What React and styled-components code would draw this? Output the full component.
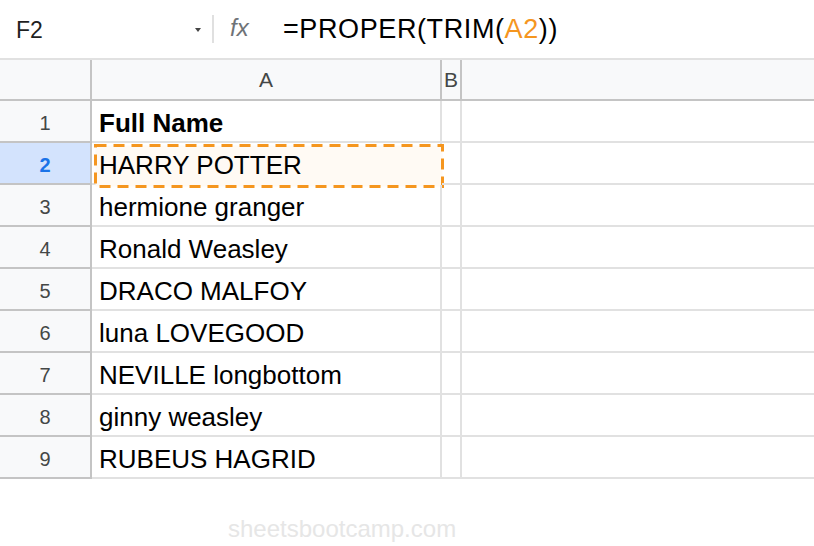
import React from 'react';
import styled, { createGlobalStyle } from 'styled-components';

const Global = createGlobalStyle`
  html, body { margin: 0; padding: 0; background: #fff; }
  body { font-family: "Liberation Sans", Arial, sans-serif; }
  * { box-sizing: border-box; }
`;

const Page = styled.div`
  width: 814px;
  height: 546px;
  display: flex;
  flex-direction: column;
  background: #fff;
  overflow: hidden;
`;

const FormulaBar = styled.div`
  height: 60px;
  display: flex;
  align-items: center;
  border-bottom: 2px solid #e1e1e1;
`;

const NameBox = styled.div`
  width: 212px;
  height: 100%;
  display: flex;
  align-items: center;
  justify-content: space-between;
  padding: 2px 11px 0 16px;
  font-size: 23px;
  color: #1f1f1f;
`;

const Caret = styled.span`
  width: 0;
  height: 0;
  border-left: 3px solid transparent;
  border-right: 3px solid transparent;
  border-top: 4px solid #444;
`;

const Divider = styled.div`
  width: 2px;
  height: 28px;
  background: #e0e0e0;
`;

const FxLabel = styled.div`
  width: 69px;
  padding: 0 0 2px 16px;
  font-style: italic;
  font-size: 24px;
  color: #6f7377;
`;

const FormulaText = styled.div`
  font-size: 27px;
  letter-spacing: 0.6px;
  color: #000;
`;

const Ref = styled.span`
  color: #f5961f;
`;

const Grid = styled.div`
  display: grid;
  grid-template-columns: 92px 350px 20px 1fr;
  grid-template-rows: 41px;
  grid-auto-rows: 42px;
`;

const HeadCell = styled.div`
  display: flex;
  align-items: center;
  justify-content: center;
  background: #f8f9fa;
  border-bottom: 2px solid #c4c4c4;
  border-right: ${p => (p.$last ? 'none' : '2px solid #c4c4c4')};
  font-size: 21px;
  color: #444746;
`;

const RowHead = styled.div`
  display: flex;
  align-items: center;
  justify-content: center;
  padding-top: 4px;
  background: ${p => (p.$active ? '#d3e3fd' : '#f8f9fa')};
  border-right: 2px solid #c4c4c4;
  border-bottom: 2px solid #c4c4c4;
  font-size: 20px;
  font-weight: ${p => (p.$active ? 700 : 400)};
  color: ${p => (p.$active ? '#1a73e8' : '#444746')};
`;

const Cell = styled.div`
  position: relative;
  display: flex;
  align-items: center;
  padding: 4px 0 0 7px;
  border-right: ${p => (p.$last ? 'none' : '2px solid #e1e1e1')};
  border-bottom: 2px solid #e1e1e1;
  font-size: 26px;
  line-height: 26px;
  font-weight: ${p => (p.$bold ? 700 : 400)};
  color: #000;
  white-space: nowrap;
`;

const CellText = styled.span`
  position: relative;
  z-index: 1;
`;

const CopyMarquee = styled.svg`
  position: absolute;
  left: 2px;
  top: 1px;
  width: 350px;
  height: 44px;
  overflow: visible;
`;

const Watermark = styled.div`
  margin-top: 38px;
  padding-left: 228px;
  font-size: 24px;
  line-height: 24px;
  color: #e6e6e6;
`;

const names = [
  'Full Name',
  'HARRY POTTER',
  'hermione granger',
  'Ronald Weasley',
  'DRACO MALFOY',
  'luna LOVEGOOD',
  'NEVILLE longbottom',
  'ginny weasley',
  'RUBEUS HAGRID',
];

function Marquee() {
  return (
    <CopyMarquee viewBox="0 0 350 44">
      <rect x="1.5" y="1.5" width="347" height="41" fill="#fffaf4" stroke="#f5961f" strokeWidth="3" strokeDasharray="11 7" />
    </CopyMarquee>
  );
}

export default function App() {
  return (
    <Page>
      <Global />
      <FormulaBar>
        <NameBox>
          <span>F2</span>
          <Caret />
        </NameBox>
        <Divider />
        <FxLabel>fx</FxLabel>
        <FormulaText>
          =PROPER(TRIM(<Ref>A2</Ref>))
        </FormulaText>
      </FormulaBar>
      <Grid>
        <HeadCell />
        <HeadCell>A</HeadCell>
        <HeadCell>B</HeadCell>
        <HeadCell $last />
        {names.map((n, i) => (
          <React.Fragment key={i}>
            <RowHead $active={i === 1}>{i + 1}</RowHead>
            <Cell $bold={i === 0}>
              {i === 1 && <Marquee />}
              <CellText>{n}</CellText>
            </Cell>
            <Cell />
            <Cell $last />
          </React.Fragment>
        ))}
      </Grid>
      <Watermark>sheetsbootcamp.com</Watermark>
    </Page>
  );
}
